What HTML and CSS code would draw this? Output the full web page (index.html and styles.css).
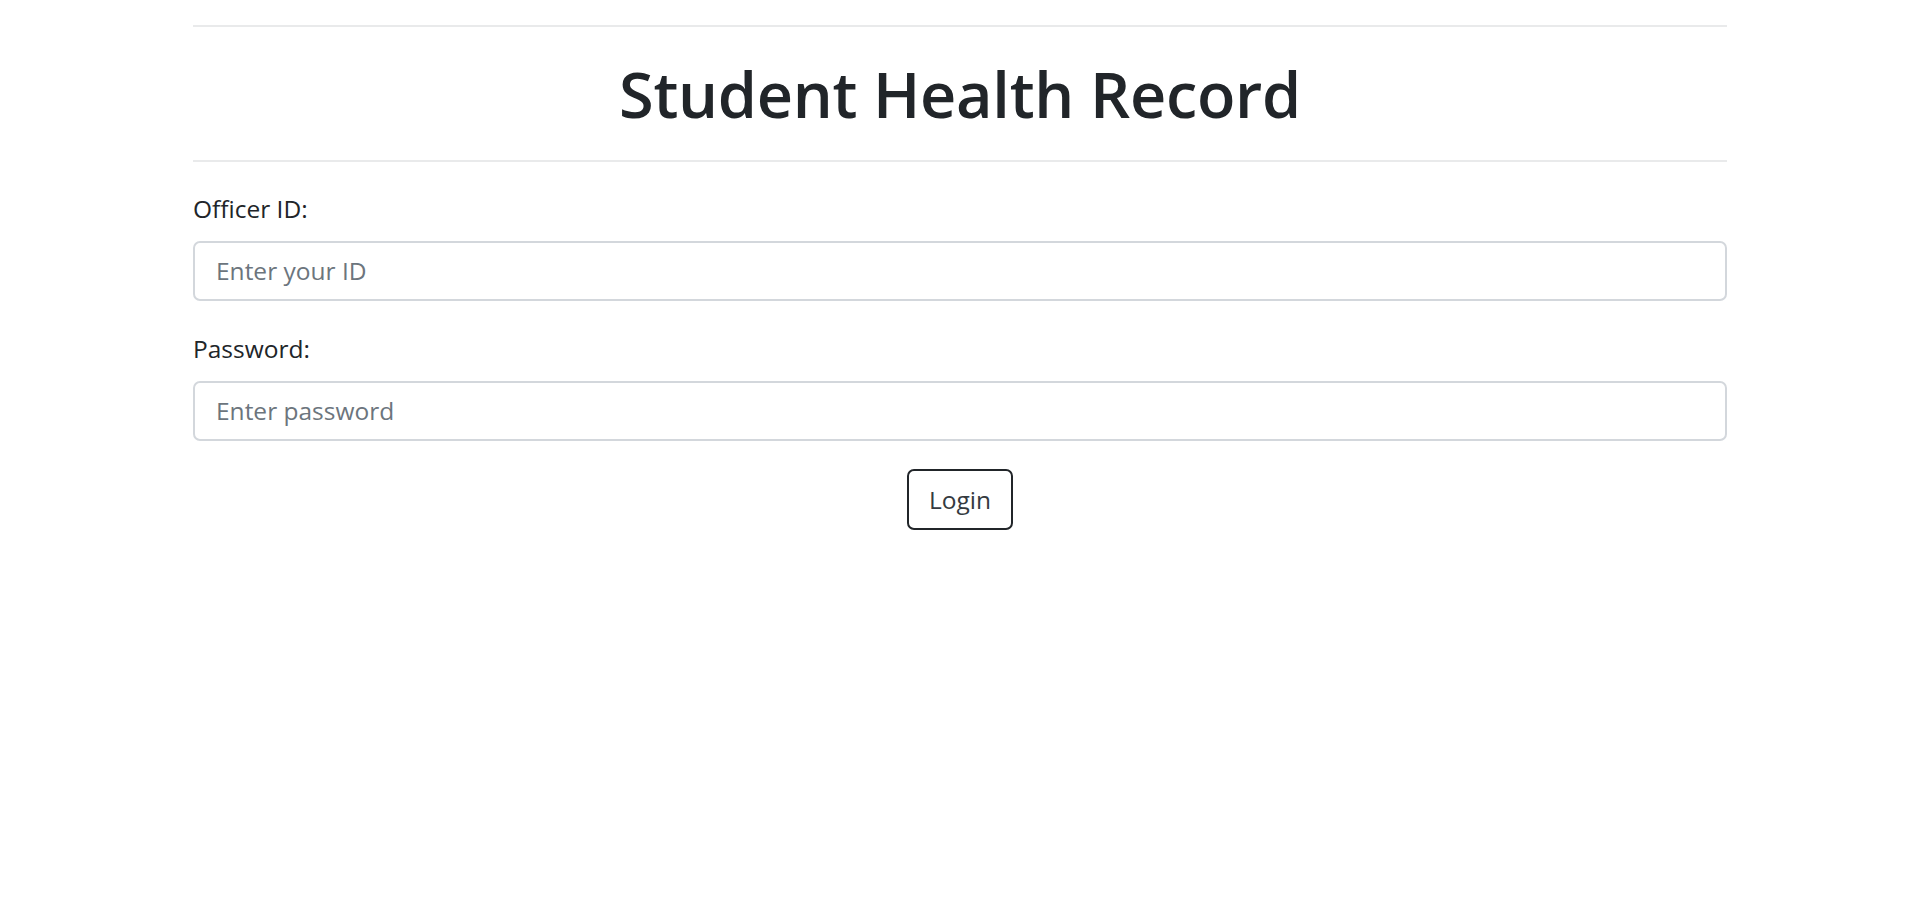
FILE: index.html
```html
<!DOCTYPE html>
<html lang="en">
<head>
<meta charset="utf-8">
<title>Student Health Record</title>
<link rel="stylesheet" href="styles.css">
</head>
<body>
<main class="container">
  <hr class="rule">
  <h1 class="title">Student Health Record</h1>
  <hr class="rule">
  <form class="login-form">
    <label class="field-label" for="officer">Officer ID:</label>
    <input class="field-input" id="officer" type="text" placeholder="Enter your ID">
    <label class="field-label" for="password">Password:</label>
    <input class="field-input" id="password" type="password" placeholder="Enter password">
    <div class="actions">
      <button class="btn-login" type="button">Login</button>
    </div>
  </form>
</main>
</body>
</html>
```

FILE: styles.css
```css
* { box-sizing: border-box; }
html, body { margin: 0; padding: 0; background: #fff; }
body {
  font-family: "Open Sans", "Noto Sans", sans-serif;
  color: #212529;
}
.container {
  width: 1534px;
  max-width: 80%;
  margin: 0 auto;
  display: flex;
  flex-direction: column;
}
.rule {
  border: 0;
  border-top: 2px solid #e9eaeb;
  margin: 0;
  height: 0;
}
.container > .rule:first-child { margin-top: 25px; }
.title {
  margin: 0;
  padding: 24px 0 23px;
  text-align: center;
  font-size: 63px;
  line-height: 86px;
  font-weight: 600;
  letter-spacing: -0.3px;
}
.login-form {
  display: flex;
  flex-direction: column;
  padding-top: 29px;
}
.field-label {
  font-size: 24.5px;
  line-height: 36px;
  margin-bottom: 14px;
}
.field-input {
  font-family: inherit;
  font-size: 24.5px;
  line-height: 36px;
  padding: 10px 21px;
  border: 2px solid #d3d7dc;
  border-radius: 7px;
  color: #212529;
  margin-bottom: 30px;
  width: 100%;
}
.field-input::placeholder { color: #6c757d; opacity: 1; }
.field-input:last-of-type { margin-bottom: 28px; }
.actions {
  display: flex;
  justify-content: center;
}
.btn-login {
  font-family: inherit;
  font-size: 24.5px;
  line-height: 37px;
  padding: 10px 20px;
  background: #fff;
  color: #343a40;
  border: 2px solid #212529;
  border-radius: 7px;
}
```
